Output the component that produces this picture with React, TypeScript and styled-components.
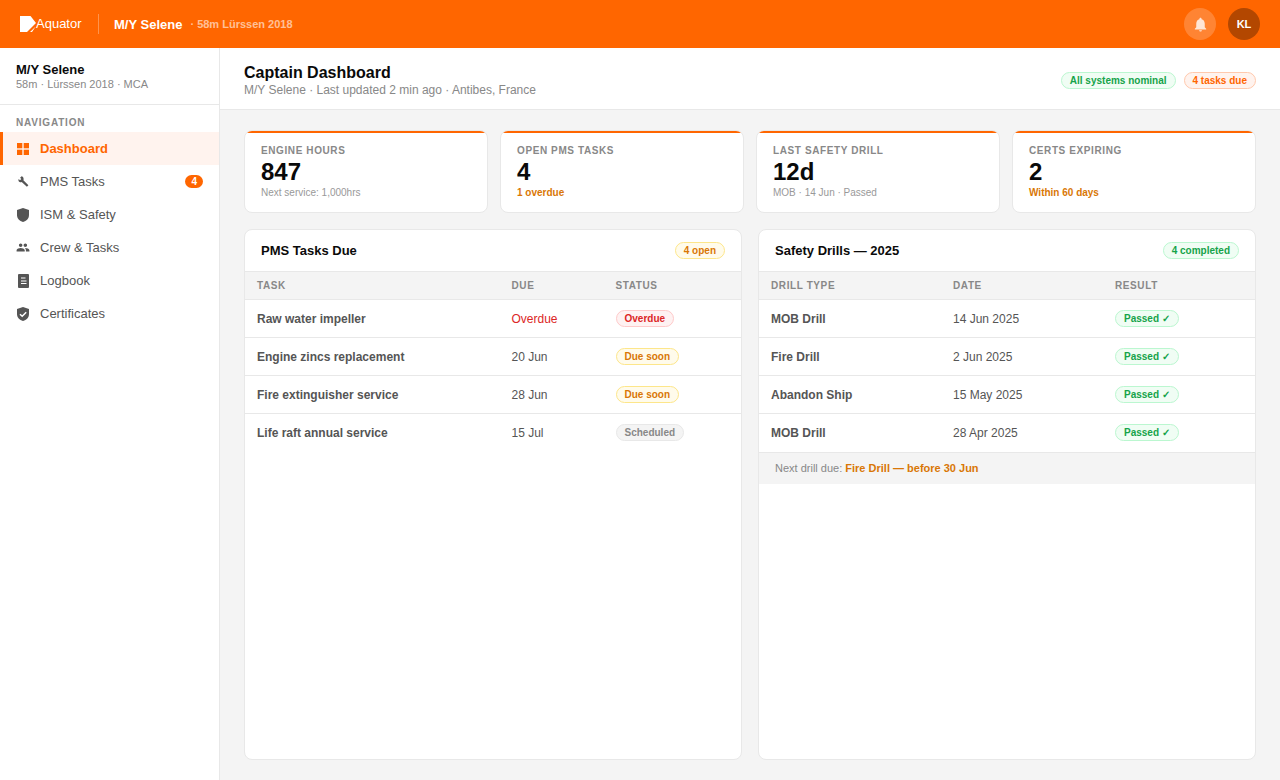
import React from "react";
import styled, { createGlobalStyle } from "styled-components";
import { MdPeople, MdNotifications } from "react-icons/md";

const Global = createGlobalStyle`
  * { box-sizing: border-box; }
  html, body { margin: 0; height: 100%; }
  body { font-family: "Liberation Sans", Arial, sans-serif; background: #f4f4f4; color: #0a0a0a; overflow: hidden; }
`;

const Shell = styled.div`display: flex; flex-direction: column; height: 780px; width: 1280px;`;
const TopBar = styled.header`height: 48px; flex: none; background: #ff6600; display: flex; align-items: center; padding: 0 20px;`;
const Logo = styled.div`display: flex; align-items: center; color: #fff; font-size: 13px; line-height: 15px; width: 62px; height: 20px;`;
const LogoName = styled.span`position: relative; top: -1px;`;
const TopDivider = styled.div`width: 1px; height: 20px; background: rgba(255,255,255,.3); margin: 0 15px 0 16px;`;
const TopVessel = styled.span`color: #fff; font-size: 13px; font-weight: 700;`;
const TopMeta = styled.span`color: rgba(255,255,255,.6); font-size: 11px; font-weight: 700; margin-left: 8px;`;
const TopRight = styled.div`margin-left: auto; display: flex; align-items: center; gap: 12px;`;
const BellButton = styled.div`width: 32px; height: 32px; border-radius: 50%; background: rgba(255,255,255,.2); display: flex; align-items: center; justify-content: center; color: rgba(255,255,255,.8);`;
const Avatar = styled.div`width: 32px; height: 32px; border-radius: 50%; background: #b34700; color: #fff; font-size: 11px; font-weight: 700; display: flex; align-items: center; justify-content: center;`;

const Body = styled.div`flex: 1; display: flex; min-height: 0;`;
const Sidebar = styled.aside`width: 220px; flex: none; background: #fff; border-right: 1px solid #e8e8e8;`;
const VesselBlock = styled.div`height: 57px; padding: 14px 16px 0; border-bottom: 1px solid #e8e8e8;`;
const VesselName = styled.div`font-size: 13px; font-weight: 700; line-height: 15px;`;
const VesselMeta = styled.div`font-size: 11px; color: #888; line-height: 13px; margin-top: 1px;`;
const NavLabel = styled.div`font-size: 10px; font-weight: 700; letter-spacing: .8px; color: #888; padding: 12px 16px 4px; line-height: 11px;`;
const NavItem = styled.div<{ $active?: boolean }>`
  height: 33px; display: flex; align-items: center; gap: 10px; font-size: 13px; padding: 0 16px 0 ${p => p.$active ? 13 : 16}px;
  color: ${p => p.$active ? "#ff6600" : "#555"}; font-weight: ${p => p.$active ? 700 : 400};
  background: ${p => p.$active ? "#fff3ee" : "transparent"}; border-left: ${p => p.$active ? "3px solid #ff6600" : "none"};
`;
const NavIcon = styled.span`width: 14px; height: 14px; flex: none; display: flex; align-items: center; justify-content: center; color: #555;`;
const NavBadge = styled.span`margin-left: auto; background: #ff6600; color: #fff; font-size: 10px; font-weight: 700; line-height: 13px; padding: 0 6px; border-radius: 8px;`;

const Main = styled.main`flex: 1; min-width: 0; display: flex; flex-direction: column;`;
const PageHead = styled.div`height: 62px; flex: none; background: #fff; border-bottom: 1px solid #e8e8e8; padding: 4px 24px 0; display: flex; align-items: center; justify-content: space-between;`;
const PageTitle = styled.h1`margin: 0; font-size: 16px; font-weight: 700; line-height: 18px;`;
const PageSub = styled.div`font-size: 12px; color: #888; line-height: 14px; margin-top: 1px;`;
const PillRow = styled.div`display: flex; gap: 8px;`;
const tones = {
  green: "background:#f0fdf4;color:#16a34a;border-color:#bbf7d0;",
  orange: "background:#fff3ee;color:#ff6600;border-color:#ffc9ad;",
  amber: "background:#fffbeb;color:#d97706;border-color:#fde68a;",
  red: "background:#fef2f2;color:#dc2626;border-color:#fecaca;",
  gray: "background:#f4f4f4;color:#888;border-color:#e8e8e8;",
};
type Tone = keyof typeof tones;
const Pill = styled.span<{ $tone: Tone }>`display: inline-block; font-size: 10px; font-weight: 700; line-height: 15px; padding: 0 8px; border-radius: 10px; border: 1px solid; white-space: nowrap; ${p => tones[p.$tone]}`;

const Content = styled.div`flex: 1; min-height: 0; padding: 20px 24px; display: flex; flex-direction: column; gap: 16px;`;
const KpiGrid = styled.div`display: grid; grid-template-columns: repeat(4, 1fr); gap: 12px; flex: none;`;
const Kpi = styled.div`
  position: relative; overflow: hidden; height: 83px; background: #fff; border: 1px solid #e8e8e8; border-radius: 8px; padding: 14px 16px 0;
  &::before { content: ""; position: absolute; left: 0; right: 0; top: 0; height: 2px; background: #ff6600; }
`;
const KpiLabel = styled.div`font-size: 10px; font-weight: 700; letter-spacing: .6px; color: #888; line-height: 12px;`;
const KpiValue = styled.div`font-size: 24px; font-weight: 700; line-height: 28px; margin-top: 1px;`;
const KpiNote = styled.div<{ $warn?: boolean }>`font-size: 10px; line-height: 12px; margin-top: 1px; color: ${p => p.$warn ? "#d97706" : "#999"}; font-weight: ${p => p.$warn ? 700 : 400};`;

const Panels = styled.div`flex: 1; min-height: 0; display: grid; grid-template-columns: 1fr 1fr; gap: 16px;`;
const Panel = styled.section`background: #fff; border: 1px solid #e8e8e8; border-radius: 8px; overflow: hidden;`;
const PanelHead = styled.div`height: 41px; padding: 0 16px; display: flex; align-items: center; justify-content: space-between;`;
const PanelTitle = styled.h2`margin: 0; font-size: 13px; font-weight: 700;`;
const Table = styled.table`width: 100%; border-collapse: collapse; table-layout: fixed;`;
const Th = styled.th`height: 28px; background: #f4f4f4; border-top: 1px solid #e8e8e8; border-bottom: 1px solid #e8e8e8; padding: 0 12px; text-align: left; font-size: 10px; font-weight: 700; letter-spacing: .6px; color: #888;`;
const Row = styled.tr`
  &:not(:last-child) td { border-bottom: 1px solid #e8e8e8; }
`;
const Td = styled.td<{ $strong?: boolean; $red?: boolean }>`height: 38px; padding: 0 12px; font-size: 12px; color: ${p => p.$red ? "#dc2626" : "#555"}; font-weight: ${p => p.$strong ? 700 : 400};`;
const Foot = styled.div`height: 32px; background: #f4f4f4; border-top: 1px solid #e8e8e8; padding: 0 16px; display: flex; align-items: center; font-size: 11px; color: #888; white-space: pre;`;
const FootStrong = styled.strong`color: #d97706;`;

function GridIcon() {
  return <svg width="12" height="12" viewBox="0 0 12 12" fill="#ff6600"><rect width="5.3" height="5.3" /><rect x="6.7" width="5.3" height="5.3" /><rect y="6.7" width="5.3" height="5.3" /><rect x="6.7" y="6.7" width="5.3" height="5.3" /></svg>;
}
function LogoMark() {
  return <svg width="16" height="16" viewBox="0 0 16 16" fill="#fff" style={{ flex: "none" }}><path d="M0 0H10.5L16 7 7 16H0Z" /><path d="M10 16 15.5 10.8 12 16Z" /></svg>;
}
function WrenchIcon() {
  return <svg width="11" height="11" viewBox="0 0 11 11" fill="#555"><path d="M3.6 0.2 2.1 1.7 3.3 3 2 4.2 0.7 3C.1 4.300.5 5.600 1.600 6 2.400 6.300 3.100 6.200 3.700 5.900L8.900 10.800 10.400 9.300 5.400 4.200C5.800 3.300 5.700 2 4.900 1 4.500.5 4.100.3 3.600.2Z" /></svg>;
}
function ShieldIcon() {
  return <svg width="12" height="14" viewBox="0 0 12 14" fill="#555"><path d="M6 0 12 2V7C12 10.500 9.500 13 6 14 2.500 13 0 10.500 0 7V2Z" /></svg>;
}
function CertIcon() {
  return <svg width="12" height="14" viewBox="0 0 12 14"><path fill="#555" d="M6 0 12 2V7C12 10.500 9.500 13 6 14 2.500 13 0 10.500 0 7V2Z" /><path fill="none" stroke="#fff" strokeWidth="1.500" d="M3 7.200 5.200 9.300 9.200 5.200" /></svg>;
}
function LogIcon() {
  return <svg width="11" height="14" viewBox="0 0 11 14"><rect width="11" height="14" rx="1" fill="#555" /><path stroke="#fff" strokeWidth="1.100" d="M3 4H7.500M3 7H8.500M3 9.500H8.500" /></svg>;
}

const nav = [
  { label: "PMS Tasks", icon: <WrenchIcon />, badge: "4" },
  { label: "ISM & Safety", icon: <ShieldIcon /> },
  { label: "Crew & Tasks", icon: <MdPeople size={17} /> },
  { label: "Logbook", icon: <LogIcon /> },
  { label: "Certificates", icon: <CertIcon /> },
];
const kpis = [
  { label: "ENGINE HOURS", value: "847", note: "Next service: 1,000hrs" },
  { label: "OPEN PMS TASKS", value: "4", note: "1 overdue", warn: true },
  { label: "LAST SAFETY DRILL", value: "12d", note: "MOB · 14 Jun · Passed" },
  { label: "CERTS EXPIRING", value: "2", note: "Within 60 days", warn: true },
];
const tasks: { t: string; d: string; s: string; tone: Tone; red?: boolean }[] = [
  { t: "Raw water impeller", d: "Overdue", s: "Overdue", tone: "red", red: true },
  { t: "Engine zincs replacement", d: "20 Jun", s: "Due soon", tone: "amber" },
  { t: "Fire extinguisher service", d: "28 Jun", s: "Due soon", tone: "amber" },
  { t: "Life raft annual service", d: "15 Jul", s: "Scheduled", tone: "gray" },
];
const drills = [
  ["MOB Drill", "14 Jun 2025"],
  ["Fire Drill", "2 Jun 2025"],
  ["Abandon Ship", "15 May 2025"],
  ["MOB Drill", "28 Apr 2025"],
];

export default function App() {
  return (
    <Shell>
      <Global />
      <TopBar>
        <Logo><LogoMark /><LogoName>Aquator</LogoName></Logo>
        <TopDivider />
        <TopVessel>M/Y Selene</TopVessel>
        <TopMeta>· 58m Lürssen 2018</TopMeta>
        <TopRight>
          <BellButton><MdNotifications size={17} /></BellButton>
          <Avatar>KL</Avatar>
        </TopRight>
      </TopBar>
      <Body>
        <Sidebar>
          <VesselBlock>
            <VesselName>M/Y Selene</VesselName>
            <VesselMeta>58m · Lürssen 2018 · MCA</VesselMeta>
          </VesselBlock>
          <NavLabel>NAVIGATION</NavLabel>
          <NavItem $active><NavIcon><GridIcon /></NavIcon>Dashboard</NavItem>
          {nav.map(n => (
            <NavItem key={n.label}>
              <NavIcon>{n.icon}</NavIcon>{n.label}
              {n.badge && <NavBadge>{n.badge}</NavBadge>}
            </NavItem>
          ))}
        </Sidebar>
        <Main>
          <PageHead>
            <div>
              <PageTitle>Captain Dashboard</PageTitle>
              <PageSub>M/Y Selene · Last updated 2 min ago · Antibes, France</PageSub>
            </div>
            <PillRow>
              <Pill $tone="green">All systems nominal</Pill>
              <Pill $tone="orange">4 tasks due</Pill>
            </PillRow>
          </PageHead>
          <Content>
            <KpiGrid>
              {kpis.map(k => (
                <Kpi key={k.label}>
                  <KpiLabel>{k.label}</KpiLabel>
                  <KpiValue>{k.value}</KpiValue>
                  <KpiNote $warn={k.warn}>{k.note}</KpiNote>
                </Kpi>
              ))}
            </KpiGrid>
            <Panels>
              <Panel>
                <PanelHead><PanelTitle>PMS Tasks Due</PanelTitle><Pill $tone="amber">4 open</Pill></PanelHead>
                <Table>
                  <colgroup><col style={{ width: 254.5 }} /><col style={{ width: 104 }} /><col /></colgroup>
                  <thead><tr><Th>TASK</Th><Th>DUE</Th><Th>STATUS</Th></tr></thead>
                  <tbody>
                    {tasks.map(r => (
                      <Row key={r.t}>
                        <Td $strong>{r.t}</Td>
                        <Td $red={r.red}>{r.d}</Td>
                        <Td><Pill $tone={r.tone}>{r.s}</Pill></Td>
                      </Row>
                    ))}
                  </tbody>
                </Table>
              </Panel>
              <Panel>
                <PanelHead><PanelTitle>Safety Drills — 2025</PanelTitle><Pill $tone="green">4 completed</Pill></PanelHead>
                <Table>
                  <colgroup><col style={{ width: 182 }} /><col style={{ width: 162 }} /><col /></colgroup>
                  <thead><tr><Th>DRILL TYPE</Th><Th>DATE</Th><Th>RESULT</Th></tr></thead>
                  <tbody>
                    {drills.map(r => (
                      <Row key={r[1]}>
                        <Td $strong>{r[0]}</Td>
                        <Td>{r[1]}</Td>
                        <Td><Pill $tone="green">Passed ✓</Pill></Td>
                      </Row>
                    ))}
                  </tbody>
                </Table>
                <Foot>Next drill due: <FootStrong>Fire Drill — before 30 Jun</FootStrong></Foot>
              </Panel>
            </Panels>
          </Content>
        </Main>
      </Body>
    </Shell>
  );
}
